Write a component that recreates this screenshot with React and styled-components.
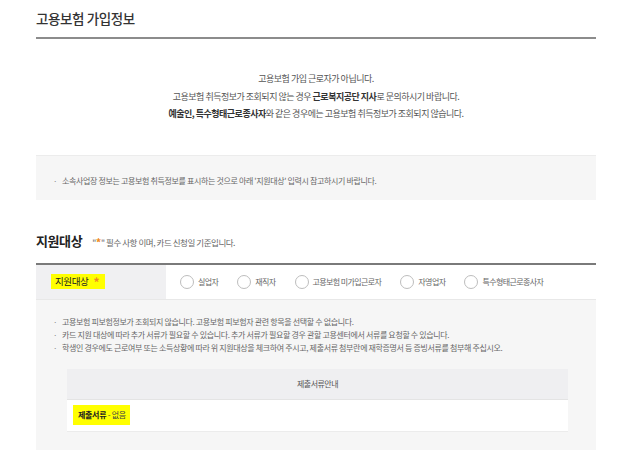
import React from "react";
import styled, { createGlobalStyle } from "styled-components";

const Global = createGlobalStyle`
  html, body { margin: 0; padding: 0; background: #fff; }
  body { font-family: "Noto Sans CJK KR", "Noto Sans", sans-serif; color: #555; }
`;

const Page = styled.div`
  width: 560px;
  padding: 0 36px;
`;

const TitleBar = styled.h2`
  margin: 0;
  padding: 8px 0 9px;
  line-height: 20px;
  font-size: 13.5px;
  font-weight: 500;
  letter-spacing: -0.4px;
  color: #333;
  border-bottom: 2px solid #8c8c8c;
`;

const Notice = styled.div`
  padding: 31px 0 32px;
  text-align: center;
  font-size: 9px;
  line-height: 17.5px;
  letter-spacing: -0.5px;
  color: #555;
  p { margin: 0; }
  b { color: #333; font-weight: 700; }
`;

const GrayBox = styled.div`
  background: #f6f6f6;
  border-top: ${(p) => (p.$bordered ? "1px solid #ececec" : "none")};
  padding: ${(p) => p.$pad};
`;

const BulletList = styled.ul`
  margin: 0;
  padding: 0;
  list-style: none;
  font-size: 8px;
  line-height: ${(p) => p.$lh || "13px"};
  letter-spacing: -0.35px;
  color: #666;
  li { position: relative; padding-left: 9px; }
  li::before {
    content: "·";
    position: absolute;
    left: 0;
    top: 0;
    color: #888;
  }
`;

const HeadingRow = styled.div`
  display: flex;
  align-items: center;
  gap: 10px;
  height: 20px;
  margin: 31px 0 12px;
`;

const Heading = styled.h3`
  margin: 0;
  font-size: 13px;
  font-weight: 700;
  letter-spacing: -0.4px;
  color: #222;
`;

const Note = styled.span`
  font-size: 8.5px;
  letter-spacing: -0.45px;
  color: #666;
  padding-top: 3px;
`;

const Star = styled.span`
  color: #f08a24;
  font-size: ${(p) => p.$size || "inherit"};
  font-weight: 700;
  margin-left: ${(p) => p.$gap || "0"};
  vertical-align: ${(p) => p.$shift || "baseline"};
`;

const FormTable = styled.div`
  border-top: 2px solid #7a7a7a;
`;

const FormRow = styled.div`
  display: grid;
  grid-template-columns: 130px 1fr;
  height: 34px;
  border-bottom: 1px solid #e8e8e8;
`;

const LabelCell = styled.div`
  background: #f0f0f2;
  display: flex;
  align-items: center;
  padding-left: 15px;
`;

const Highlight = styled.span`
  background: #ffff00;
  color: #222;
  font-size: 9.5px;
  letter-spacing: -0.4px;
  padding: 2px 6px 2px 4px;
  line-height: 11px;
`;

const OptionCell = styled.div`
  display: flex;
  align-items: center;
  gap: 19px;
  padding-left: 14px;
`;

const Option = styled.label`
  display: flex;
  align-items: center;
  gap: 4px;
  font-size: 8px;
  letter-spacing: -0.6px;
  color: #666;
`;

const Circle = styled.span`
  width: 12px;
  height: 12px;
  border: 1.5px solid #bdbdbd;
  border-radius: 50%;
  background: #fff;
  flex-shrink: 0;
`;

const DocBox = styled.div`
  margin: 15px 28px 0 14px;
  background: #fff;
  border-bottom: 1px solid #ececec;
`;

const DocHead = styled.div`
  background: #efeff1;
  height: 30px;
  line-height: 30px;
  text-align: center;
  font-size: 8px;
  letter-spacing: -0.5px;
  color: #555;
  border-bottom: 1px solid #e4e4e4;
`;

const DocBody = styled.div`
  height: 31px;
  display: flex;
  align-items: center;
  padding-left: 6px;
`;

const DocMark = styled.span`
  background: #ffff00;
  font-size: 8px;
  letter-spacing: -0.3px;
  color: #444;
  padding: 4px 4px 5px 5px;
  b { color: #222; font-weight: 700; }
`;

const options = ["실업자", "재직자", "고용보험 미가입근로자", "자영업자", "특수형태근로종사자"];

export default function App() {
  return (
    <Page>
      <Global />
      <TitleBar>고용보험 가입정보</TitleBar>
      <Notice>
        <p>고용보험 가입 근로자가 아닙니다.</p>
        <p>
          고용보험 취득정보가 조회되지 않는 경우 <b>근로복지공단 지사</b>로 문의하시기 바랍니다.
        </p>
        <p>
          <b>예술인, 특수형태근로종사자</b>와 같은 경우에는 고용보험 취득정보가 조회되지 않습니다.
        </p>
      </Notice>
      <GrayBox $bordered $pad="17px 17px 11px">
        <BulletList $lh="16px">
          <li>소속사업장 정보는 고용보험 취득정보를 표시하는 것으로 아래 '지원대상' 입력시 참고하시기 바랍니다.</li>
        </BulletList>
      </GrayBox>
      <HeadingRow>
        <Heading>지원대상</Heading>
        <Note>
          "<Star $size="11px" $shift="-1px">*</Star>" 필수 사항 이며, 카드 신청일 기준입니다.
        </Note>
      </HeadingRow>
      <FormTable>
        <FormRow>
          <LabelCell>
            <Highlight>
              지원대상<Star $size="12px" $shift="-2px" $gap="5px">*</Star>
            </Highlight>
          </LabelCell>
          <OptionCell>
            {options.map((o) => (
              <Option key={o}>
                <Circle />
                {o}
              </Option>
            ))}
          </OptionCell>
        </FormRow>
      </FormTable>
      <GrayBox $pad="15px 0 18px 17px">
        <BulletList>
          <li>고용보험 피보험정보가 조회되지 않습니다. 고용보험 피보험자 관련 항목을 선택할 수 없습니다.</li>
          <li>카드 지원 대상에 따라 추가 서류가 필요할 수 있습니다. 추가 서류가 필요할 경우 관할 고용센터에서 서류를 요청할 수 있습니다.</li>
          <li>학생인 경우에도 근로여부 또는 소득상황에 따라 위 지원대상을 체크하여 주시고, 제출서류 첨부란에 재학증명서 등 증빙서류를 첨부해 주십시오.</li>
        </BulletList>
        <DocBox>
          <DocHead>제출서류안내</DocHead>
          <DocBody>
            <DocMark>
              <b>제출서류</b> - 없음
            </DocMark>
          </DocBody>
        </DocBox>
      </GrayBox>
    </Page>
  );
}
